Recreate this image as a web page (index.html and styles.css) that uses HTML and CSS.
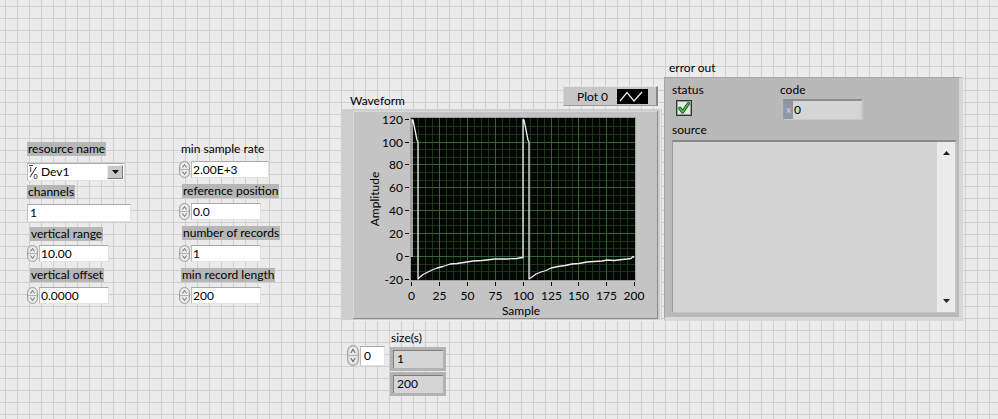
FILE: index.html
```html
<!DOCTYPE html>
<html>
<head>
<meta charset="utf-8">
<link rel="stylesheet" href="styles.css">
</head>
<body>
<svg class="defs" width="0" height="0">
  <symbol id="spin" viewBox="0 0 11 17" preserveAspectRatio="none">
    <rect x="0.5" y="0.5" width="10" height="16" rx="5" ry="5" fill="#dadada" stroke="#a4a4a4"/>
    <rect x="2" y="1.5" width="7" height="14" rx="3.5" ry="3.5" fill="#e9e9e9"/>
    <line x1="1" y1="8.5" x2="10" y2="8.5" stroke="#b4b4b4"/>
    <path d="M3.5 6.5 L5.5 3.5 L7.5 6.5" fill="none" stroke="#6c6c6c"/>
    <path d="M3.5 10.5 L5.5 13.5 L7.5 10.5" fill="none" stroke="#6c6c6c"/>
  </symbol>
</svg>

<div class="panel">
  <div class="col col1">
    <span class="lbl bg">resource name</span>
    <div class="ring mt7">
      <svg class="io" width="11" height="16" viewBox="0 0 11 16">
        <text x="1.5" y="7.5" font-size="8" font-family="Liberation Sans, sans-serif" fill="#000">I</text>
        <line x1="1" y1="1.5" x2="5" y2="1.5" stroke="#000" stroke-width="0.8"/>
        <line x1="8.5" y1="3" x2="2" y2="13" stroke="#000" stroke-width="0.9"/>
        <text x="5.5" y="15" font-size="7.5" font-family="Liberation Sans, sans-serif" fill="#000">0</text>
      </svg>
      <span class="ring-text">Dev1</span>
      <span class="ring-btn"><svg width="7" height="4" viewBox="0 0 7 4"><path d="M0 0H7L3.5 4Z" fill="#111"/></svg></span>
    </div>
    <span class="lbl bg mt4">channels</span>
    <div class="str mt5">1</div>
    <span class="lbl bg mt5 ml3">vertical range</span>
    <div class="num mt4"><svg class="spin" width="11" height="17"><use href="#spin"/></svg><span class="nbox w70">10.00</span></div>
    <span class="lbl bg mt6 ml3">vertical offset</span>
    <div class="num mt5"><svg class="spin" width="11" height="17"><use href="#spin"/></svg><span class="nbox w70">0.0000</span></div>
  </div>

  <div class="col col2">
    <span class="lbl ml1">min sample rate</span>
    <div class="num mt5"><svg class="spin" width="11" height="17"><use href="#spin"/></svg><span class="nbox w78">2.00E+3</span></div>
    <span class="lbl bg mt6 ml3">reference position</span>
    <div class="num mt5"><svg class="spin" width="11" height="17"><use href="#spin"/></svg><span class="nbox w70">0.0</span></div>
    <span class="lbl bg mt6 ml3">number of records</span>
    <div class="num mt5"><svg class="spin" width="11" height="17"><use href="#spin"/></svg><span class="nbox w70">1</span></div>
    <span class="lbl bg mt6 ml2">min record length</span>
    <div class="num mt5"><svg class="spin" width="11" height="17"><use href="#spin"/></svg><span class="nbox w70">200</span></div>
  </div>

  <div class="col col3">
    <div class="ghead">
      <span class="lbl wf-label">Waveform</span>
      <div class="legend">
        <span class="legend-text">Plot 0</span>
        <svg class="swatch" width="31" height="15" viewBox="0 0 31 15">
          <rect width="31" height="15" fill="#000"/>
          <path d="M3 12 L10 3.5 L17 12 L25 3" fill="none" stroke="#f4f4f4" stroke-width="1.2"/>
        </svg>
      </div>
    </div>
    <svg class="graph" width="320" height="212" viewBox="0 0 320 212">
      <rect width="320" height="212" fill="#cecece"/>
      <rect x="11" y="2" width="304" height="207" fill="#c4c4c4"/>
      <path d="M11 2.5H315M11.5 2V209" stroke="#d8d8d8"/>
      <path d="M315.5 2V210M11 209.5H316" stroke="#8c8c8c"/>
      <path d="M318.5 0V212M0 211.5H320" stroke="#ededed"/>
      <rect x="68" y="8" width="226" height="164" fill="#a0a0a0"/>
      <rect x="69" y="9" width="224" height="162" fill="#040704"/>
      <path d="M76.5 9V171M83.5 9V171M90.5 9V171M104.5 9V171M111.5 9V171M118.5 9V171M132.5 9V171M139.5 9V171M146.5 9V171M160.5 9V171M167.5 9V171M174.5 9V171M188.5 9V171M195.5 9V171M202.5 9V171M216.5 9V171M223.5 9V171M230.5 9V171M243.5 9V171M250.5 9V171M257.5 9V171M271.5 9V171M278.5 9V171M285.5 9V171M69 17.5H293M69 25.5H293M69 40.5H293M69 48.5H293M69 63.5H293M69 71.5H293M69 86.5H293M69 94.5H293M69 109.5H293M69 116.5H293M69 132.5H293M69 139.5H293M69 155.5H293M69 162.5H293" stroke="#1a361a" fill="none"/>
      <path d="M97.5 9V171M125.5 9V171M153.5 9V171M181.5 9V171M209.5 9V171M236.5 9V171M264.5 9V171M69 33.5H293M69 55.5H293M69 78.5H293M69 101.5H293M69 124.5H293M69 147.5H293" stroke="#336233" fill="none"/>
      <path d="M63 10.5H67M63 33.5H67M63 55.5H67M63 78.5H67M63 101.5H67M63 124.5H67M63 147.5H67M63 170.5H67M69.5 173V177M97.5 173V177M125.5 173V177M153.5 173V177M181.5 173V177M209.5 173V177M236.5 173V177M264.5 173V177M292.5 173V177" stroke="#111" fill="none"/>
      <g class="axis" text-anchor="end">
        <text x="61" y="14.5">120</text>
        <text x="61" y="37.5">100</text>
        <text x="61" y="59.5">80</text>
        <text x="61" y="82.5">60</text>
        <text x="61" y="105.5">40</text>
        <text x="61" y="128.5">20</text>
        <text x="61" y="151.5">0</text>
        <text x="61" y="174.5">-20</text>
      </g>
      <g class="axis" text-anchor="middle">
        <text x="69.5" y="191">0</text>
        <text x="97.5" y="191">25</text>
        <text x="125.5" y="191">50</text>
        <text x="153.5" y="191">75</text>
        <text x="181.5" y="191">100</text>
        <text x="209.5" y="191">125</text>
        <text x="236.5" y="191">150</text>
        <text x="264.5" y="191">175</text>
        <text x="292" y="191">200</text>
        <text x="179" y="206">Sample</text>
        <text x="37" y="90" transform="rotate(-90 37 90)">Amplitude</text>
      </g>
      <polyline fill="none" stroke="#eeeeee" stroke-width="1.3" stroke-linejoin="round" points="70,148 70,10.5 71,11 75,31 76,33 76,170 78,168 81,165.5 85,163.5 90,161 95,159 101,157.5 108,155 115,154.5 125,153 131,152 140,151.5 153,150 165,150 175,149.5 180,148.5 181,149 181,10.5 182,11 186,31 187,33 187,170 190,168 194,165 199,163 204,161.5 209,159 216,157.5 223,156.5 230,155 237,154.5 245,153 252,152.5 260,152 265,151 272,151.5 280,150.5 285,150 289,149.5 291,147.5 292,148.5"/>
    </svg>
    <div class="sizes">
      <div class="sz-ctrl">
        <svg class="spin" width="12" height="21"><use href="#spin"/></svg>
        <span class="nbox szbox">0</span>
      </div>
      <div class="sz-out">
        <span class="lbl">size(s)</span>
        <div class="ind mt2">1</div>
        <div class="ind mt1">200</div>
      </div>
    </div>
  </div>

  <div class="col col4">
    <span class="lbl ml4">error out</span>
    <div class="cluster">
      <div class="crow">
        <div class="stcol">
          <span class="lbl">status</span>
          <svg class="chk" width="16" height="16" viewBox="0 0 16 16">
            <rect x="0.5" y="0.5" width="15" height="15" fill="#d0d0d0" stroke="#333"/>
            <rect x="1.5" y="1.5" width="13" height="13" fill="#e4ece4" stroke="#9a9a9a"/>
            <path d="M3.8 8.2 L6.6 12 L12.4 3.6" fill="none" stroke="#1d4d1d" stroke-width="3.2" stroke-linecap="round" stroke-linejoin="round"/>
            <path d="M3.8 8.2 L6.6 12 L12.4 3.6" fill="none" stroke="#46c846" stroke-width="1.5" stroke-linecap="round" stroke-linejoin="round"/>
          </svg>
        </div>
        <div class="cdcol">
          <span class="lbl">code</span>
          <div class="code"><span class="radix">x</span><span class="code-val">0</span></div>
        </div>
      </div>
      <span class="lbl src-lbl">source</span>
      <div class="src">
        <div class="src-body"></div>
        <div class="scroll">
          <svg width="7" height="4" viewBox="0 0 7 4"><path d="M0 4H7L3.5 0Z" fill="#222"/></svg>
          <svg width="7" height="4" viewBox="0 0 7 4"><path d="M0 0H7L3.5 4Z" fill="#222"/></svg>
        </div>
      </div>
    </div>
  </div>
</div>
</body>
</html>
```
FILE: styles.css
```css
html, body {
  margin: 0;
  padding: 0;
}
body {
  width: 998px;
  height: 419px;
  overflow: hidden;
  font-family: Lato, "Liberation Sans", sans-serif;
  font-size: 12px;
  color: #000;
  background-color: #ebebeb;
  background-image:
    linear-gradient(to right, #cfcfcf 1px, transparent 1px),
    linear-gradient(to bottom, #cfcfcf 1px, transparent 1px);
  background-size: 12px 12px;
  background-position: 5px 6px;
}
.defs {
  position: absolute;
  width: 0;
  height: 0;
  overflow: hidden;
}
.panel {
  display: flex;
  align-items: flex-start;
}
.col {
  display: flex;
  flex-direction: column;
  align-items: flex-start;
}
.col1 { margin: 142px 0 0 27px; width: 104px; }
.col2 { margin: 142px 0 0 48px; width: 100px; }
.col3 { margin: 85px 0 0 63px; width: 320px; align-items: stretch; }
.col4 { margin: 61px 0 0 2px; width: 299px; align-items: stretch; }

.lbl {
  display: block;
  height: 14px;
  line-height: 14px;
  padding: 0 1px;
  white-space: nowrap;
}
.lbl.bg { background: #b6b6b6; }

.mt1 { margin-top: 1px; }
.mt2 { margin-top: 2px; }
.mt4 { margin-top: 4px; }
.mt5 { margin-top: 5px; }
.mt6 { margin-top: 6px; }
.mt7 { margin-top: 7px; }
.ml1 { margin-left: 1px; }
.ml2 { margin-left: 2px; }
.ml3 { margin-left: 3px; }
.ml4 { margin-left: 4px; }

/* ring control */
.ring {
  display: flex;
  align-items: center;
  width: 98px;
  height: 18px;
  box-sizing: border-box;
  background: #fff;
  border-top: 1px solid #a9a9a9;
  border-left: 1px solid #bdbdbd;
  border-right: 1px solid #e2e2e2;
  border-bottom: 1px solid #e2e2e2;
}
.io { display: block; flex: none; }
.ring-text { margin-left: 2px; line-height: 16px; }
.ring-btn {
  margin-left: auto;
  margin-right: 1px;
  width: 16px;
  height: 14px;
  box-sizing: border-box;
  background: #c8c8c8;
  border-top: 1px solid #f0f0f0;
  border-left: 1px solid #f0f0f0;
  border-right: 1px solid #7a7a7a;
  border-bottom: 1px solid #7a7a7a;
  display: flex;
  align-items: center;
  justify-content: center;
}
.ring-btn svg { display: block; }

/* string control */
.str {
  width: 104px;
  height: 18px;
  box-sizing: border-box;
  background: #fff;
  border-top: 1px solid #a9a9a9;
  border-left: 1px solid #bdbdbd;
  border-right: 1px solid #e2e2e2;
  border-bottom: 1px solid #e2e2e2;
  padding-left: 2px;
  line-height: 16px;
}

/* numeric control */
.num {
  display: flex;
  align-items: flex-start;
}
.spin { display: block; flex: none; }
.nbox {
  display: block;
  height: 17px;
  box-sizing: border-box;
  margin-left: 1px;
  background: #fff;
  border-top: 1px solid #a9a9a9;
  border-left: 1px solid #bdbdbd;
  border-right: 1px solid #e2e2e2;
  border-bottom: 1px solid #e2e2e2;
  padding-left: 1px;
  line-height: 15px;
  white-space: nowrap;
}
.w70 { width: 70px; }
.w78 { width: 78px; }

/* graph */
.ghead {
  display: flex;
  align-items: flex-start;
  height: 24px;
}
.wf-label { margin: 9px 0 0 7px; }
.legend {
  margin: 1px 4px 0 auto;
  width: 95px;
  height: 20px;
  box-sizing: border-box;
  background: #c6c6c6;
  border-top: 1px solid #e4e4e4;
  border-left: 1px solid #dadada;
  border-right: 2px solid #8a8a8a;
  border-bottom: 1px solid #9a9a9a;
  display: flex;
  align-items: center;
}
.legend-text { margin-left: 13px; }
.swatch { display: block; margin-left: auto; margin-right: 8px; }
.graph { display: block; }
.axis text {
  font-family: Lato, "Liberation Sans", sans-serif;
  font-size: 12px;
  fill: #000;
}

/* size(s) */
.sizes {
  display: flex;
  align-items: flex-start;
  margin-top: 10px;
}
.sz-ctrl {
  display: flex;
  align-items: flex-start;
  margin: 14px 0 0 5px;
}
.szbox {
  width: 25px;
  height: 20px;
  margin-top: 1px;
  line-height: 18px;
  padding-left: 3px;
}
.sz-out {
  display: flex;
  flex-direction: column;
  align-items: flex-start;
  margin-left: 5px;
}
.ind {
  width: 56px;
  height: 24px;
  box-sizing: border-box;
  background: #d5d5d5;
  border: 3px solid #b3b3b3;
  box-shadow: inset 1px 1px 0 #808080;
  padding-left: 4px;
  line-height: 18px;
}

/* error cluster */
.cluster {
  margin-top: 2px;
  height: 244px;
  box-sizing: border-box;
  background: #b9b9b9;
  border-top: 1px solid #a6a6a6;
  border-left: 1px solid #a6a6a6;
  border-right: 4px solid #d8d8d8;
  border-bottom: 4px solid #d8d8d8;
  padding: 5px 0 0 6px;
  display: flex;
  flex-direction: column;
  align-items: flex-start;
}
.crow {
  display: flex;
  align-items: flex-start;
  height: 37px;
}
.stcol {
  width: 108px;
  display: flex;
  flex-direction: column;
  align-items: flex-start;
}
.chk { display: block; margin: 3px 0 0 5px; }
.cdcol {
  display: flex;
  flex-direction: column;
  align-items: flex-start;
}
.code {
  display: flex;
  margin: 2px 0 0 4px;
  width: 80px;
  height: 21px;
  box-sizing: border-box;
  background: #d5d5d5;
  border-top: 2px solid #8f8f8f;
  border-left: 1px solid #9c9c9c;
  border-right: 2px solid #c9c9c9;
  border-bottom: 1px solid #c9c9c9;
}
.radix {
  width: 9px;
  background: #8e97a3;
  color: #d2d6dc;
  font-size: 10px;
  line-height: 17px;
  text-align: center;
}
.code-val { padding-left: 1px; line-height: 17px; }
.src-lbl { margin-top: 3px; }
.src {
  display: flex;
  margin: 3px 0 0 1px;
  width: 285px;
  height: 173px;
  box-sizing: border-box;
  background: #d3d3d3;
  border-top: 2px solid #8a8a8a;
  border-left: 1px solid #9c9c9c;
  border-right: 2px solid #c4c4c4;
  border-bottom: 1px solid #c4c4c4;
}
.src-body { flex: 1; }
.scroll {
  width: 18px;
  background: #ebebeb;
  display: flex;
  flex-direction: column;
  justify-content: space-between;
  align-items: center;
  padding: 9px 0 9px;
  box-sizing: border-box;
}
.scroll svg { display: block; }
```
